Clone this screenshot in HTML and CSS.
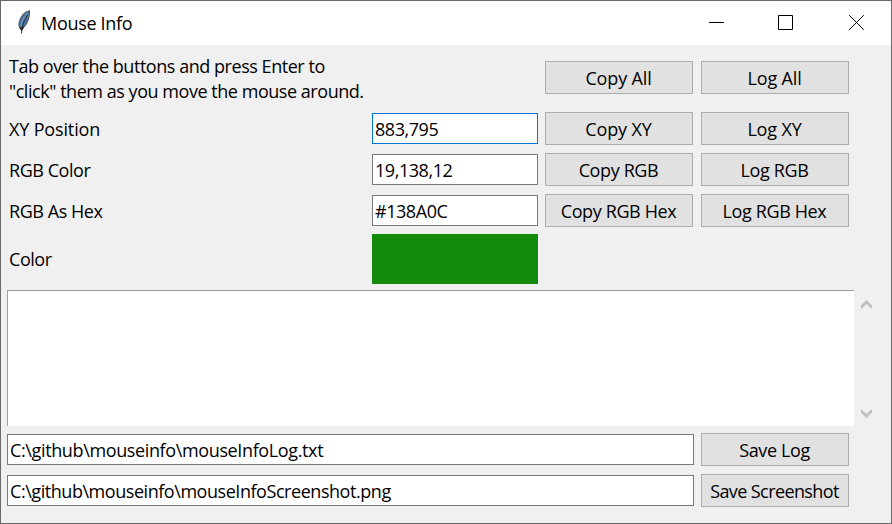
FILE: index.html
```html
<!DOCTYPE html>
<html lang="en">
<head>
<meta charset="utf-8">
<title>Mouse Info</title>
<link rel="stylesheet" href="styles.css">
</head>
<body>
<div class="window">
  <header class="titlebar">
    <svg class="feather" width="14" height="25" viewBox="0 0 14 25">
      <path d="M12.500 .800 C8.500 1.800 4.500 5.500 2.800 10.500 C1.500 14 1.600 16 3 18 L6 18 C8.500 15.500 10.500 12.500 11.500 9 C12.300 6 12.800 3.500 12.500 .800Z" fill="#4479b0" stroke="#55585c" stroke-width="1.1"/>
      <path d="M10.500 3.500 C7 7 4.500 11.500 3.800 16.500" fill="none" stroke="#8797a6" stroke-width="1"/>
      <path d="M10.500 5 C7.500 10 5.200 15 4.500 23.500" fill="none" stroke="#222" stroke-width=".9"/>
      <path d="M2.800 17 L4.500 20 L6.500 17" fill="none" stroke="#111" stroke-width="1.3"/>
    </svg>
    <h1 class="title">Mouse Info</h1>
    <svg class="controls" width="155" height="16" viewBox="0 0 155 16" fill="none" stroke="#000">
      <path d="M0 7.500H15M69.500 .5H83.500V14.500H69.500Z"/>
      <path d="M140.200 .2L154.800 14.800M154.800 .2L140.200 14.800"/>
    </svg>
  </header>
  <main>
    <div class="fields">
      <p class="label intro">Tab over the buttons and press Enter to<br>"click" them as you move the mouse around.</p>
      <button class="btn wide copy">Copy All</button><button class="btn wide">Log All</button>
      <span class="label wide">XY Position</span><div class="entry focused">883,795</div><button class="btn wide">Copy XY</button><button class="btn wide">Log XY</button>
      <span class="label">RGB Color</span><div class="entry">19,138,12</div><button class="btn">Copy RGB</button><button class="btn">Log RGB</button>
      <span class="label">RGB As Hex</span><div class="entry">#138A0C</div><button class="btn">Copy RGB Hex</button><button class="btn">Log RGB Hex</button>
      <span class="label color">Color</span><div class="swatch"></div>
    </div>
    <div class="log">
      <div class="textarea"></div>
      <div class="scrollbar">
        <svg width="11" height="9" viewBox="0 0 11 9"><path d="M0 5.500L5.500 0L11 5.500V9L5.500 4L0 9Z" fill="#bfbfbf"/></svg>
        <svg width="11" height="9" viewBox="0 0 11 9"><path d="M0 3.500L5.500 9L11 3.500V0L5.500 5L0 0Z" fill="#bfbfbf"/></svg>
      </div>
    </div>
    <div class="files">
      <div class="entry path">C:\github\mouseinfo\mouseInfoLog.txt</div><button class="btn">Save Log</button>
      <div class="entry">C:\github\mouseinfo\mouseInfoScreenshot.png</div><button class="btn tight">Save Screenshot</button>
    </div>
  </main>
</div>
</body>
</html>
```
FILE: styles.css
```css
* { box-sizing: border-box; }
body { margin: 0; font: 18px/25px "Open Sans", "Noto Sans", sans-serif; letter-spacing: -0.45px; color: #000; }
.window { width: 892px; height: 524px; border: 1px solid #6b6868; background: #f0f0f0; overflow: hidden; }
.titlebar { height: 44px; padding: 0 27px 0 16px; display: flex; align-items: center; background: #fff; }
.feather { margin-right: 10px; margin-top: -1px; }
.title { margin: 0; font-size: 18px; font-weight: 400; letter-spacing: -0.3px; }
.controls { margin-left: auto; }
main { padding: 2px 0 0 6px; }
.fields { display: grid; grid-template-columns: 365px 166px 156px 155px; grid-template-rows: 61px 41px 41px 41px 56px; align-items: center; }
.fields .btn { width: 148px; margin-left: 7px; }
.label { padding: 2px 0 0 2px; white-space: nowrap; }
.label.color { padding-top: 0; }
.intro { grid-column: span 2; margin: 1px 0 0; letter-spacing: -0.46px; }
.btn { height: 33px; padding: 2px 1px 0 0; border: 1px solid #adadad; background: #e1e1e1; color: #000; font: inherit; letter-spacing: -0.38px; text-align: center; white-space: nowrap; }
.wide, .btn.wide { letter-spacing: -0.15px; }
.btn.tight { letter-spacing: -0.6px; }
.entry { height: 31px; padding: 1px 2px 0; border: 1px solid #7a7a7a; background: #fff; line-height: 28px; white-space: nowrap; }
.entry.path { letter-spacing: -0.37px; }
.entry.focused { border-color: #0078d7; }
.swatch { height: 50px; background: #138a0c; }
.log { display: flex; height: 136px; margin-top: 3px; }
.textarea { width: 847px; border-top: 1px solid #a0a0a0; border-left: 1px solid #a0a0a0; background: #fff; }
.scrollbar { padding: 10px 0 8px 7px; display: flex; flex-direction: column; justify-content: space-between; }
.files { display: grid; grid-template-columns: 687px 148px; gap: 8px 7px; align-items: center; margin-top: 7px; }
```
